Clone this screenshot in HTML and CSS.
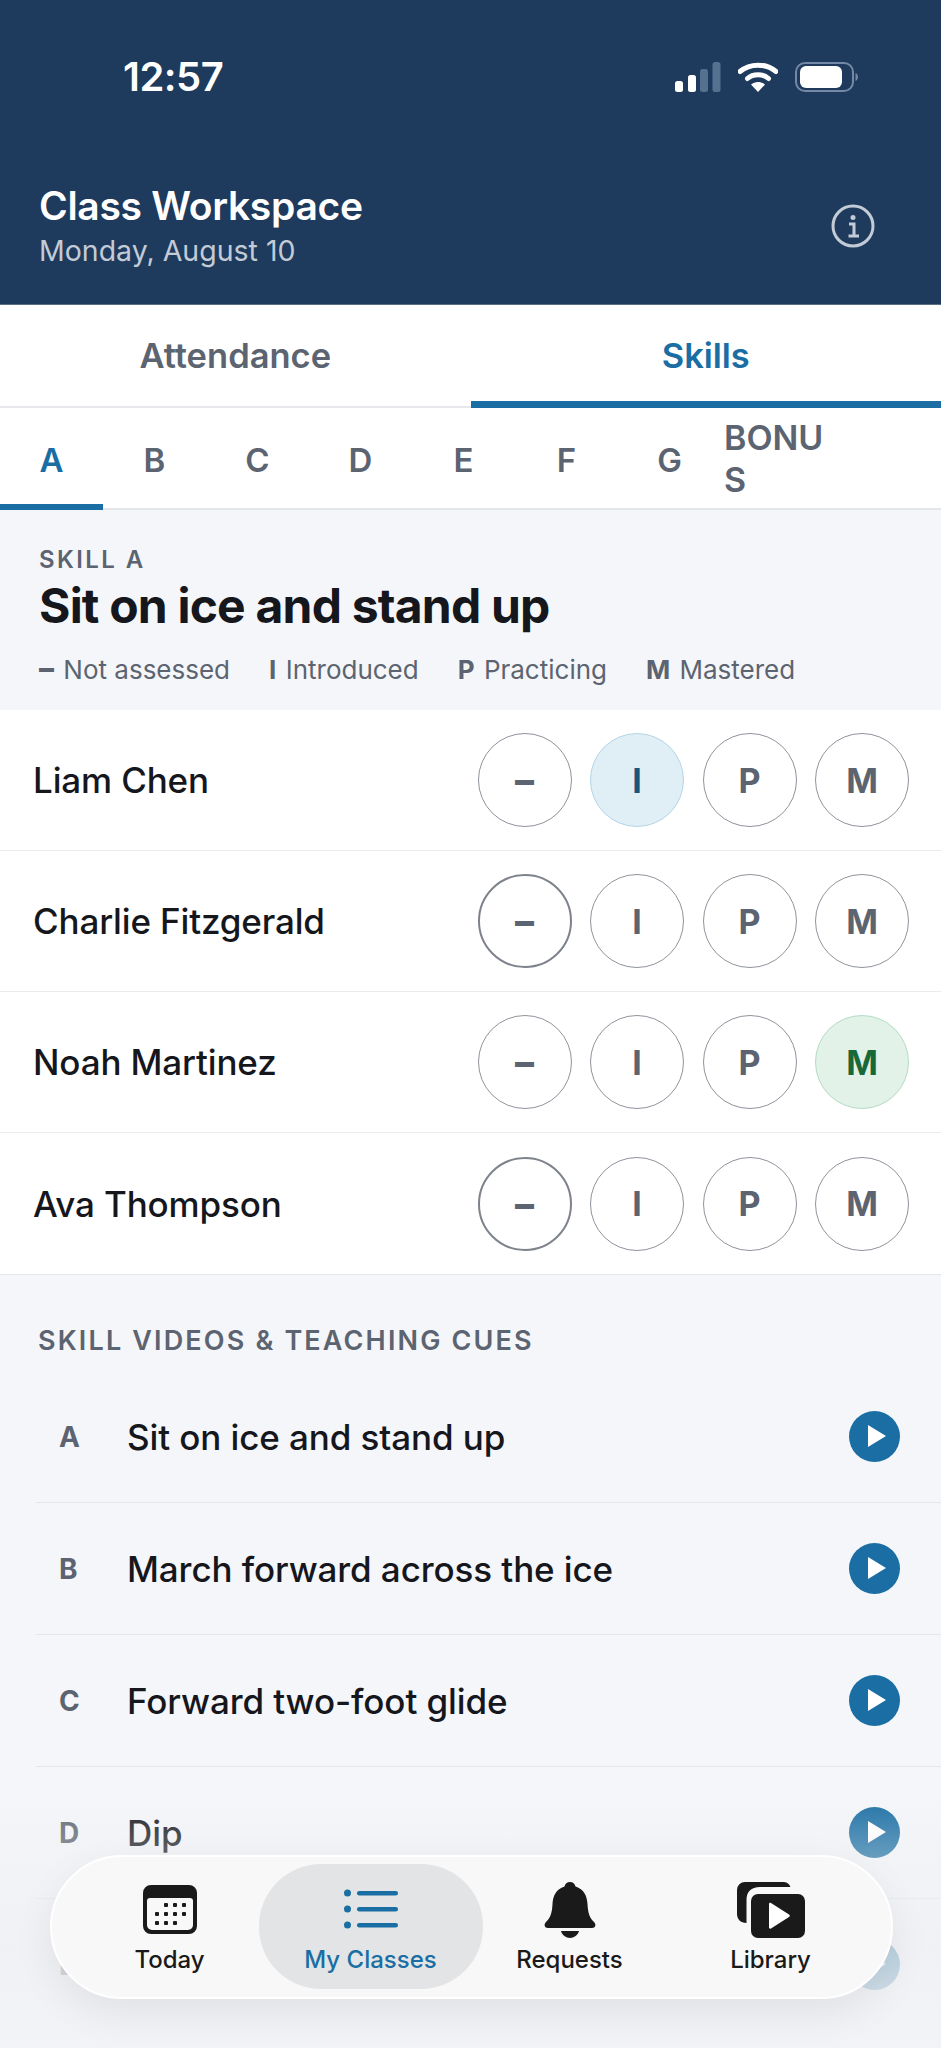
FILE: index.html
```html
<!DOCTYPE html>
<html lang="en">
<head>
  <meta charset="UTF-8" />
  <meta name="viewport" content="width=device-width, initial-scale=1.0"/>
  <title>Class Workspace</title>
  <link rel="stylesheet" href="styles.css">
</head>
<body>
<div class="app">

  <header class="top">
    <div class="status">
      <span class="time">12:57</span>
      <div class="status-icons">
        <svg width="46" height="30" viewBox="0 0 46 30">
          <rect x="0" y="19" width="8" height="11" rx="2.5" fill="#fff"/>
          <rect x="13" y="13" width="8" height="17" rx="2.5" fill="#fff"/>
          <rect x="25" y="7" width="8" height="23" rx="2.5" fill="#56708f"/>
          <rect x="37.500" y="0" width="8" height="30" rx="2.5" fill="#56708f"/>
        </svg>
        <svg width="40" height="30" viewBox="0 0 40 30">
          <path d="M2 9.500C12 1 28 1 38 9.500" fill="none" stroke="#fff" stroke-width="5" stroke-linecap="round"/>
          <path d="M9.500 16.500C15 11.500 25 11.500 30.500 16.500" fill="none" stroke="#fff" stroke-width="5" stroke-linecap="round"/>
          <path d="M13 22.500C17 19 23 19 27 22.500L20 30Z" fill="#fff"/>
        </svg>
        <svg width="64" height="30" viewBox="0 0 64 30">
          <rect x="1" y="1" width="57" height="28" rx="9" fill="none" stroke="#7389a5" stroke-width="2"/>
          <rect x="5" y="4" width="42" height="22" rx="6" fill="#fff"/>
          <path d="M60.500 11C62.500 12 63 13.500 63 15S62.500 18 60.500 19Z" fill="#7389a5"/>
        </svg>
      </div>
    </div>
    <div class="top-row">
      <div>
        <h1>Class Workspace</h1>
        <p class="date">Monday, August 10</p>
      </div>
      <svg class="info" width="44" height="44" viewBox="0 0 44 44">
        <circle cx="22" cy="22" r="20" fill="none" stroke="#c3cbd6" stroke-width="3"/>
        <circle cx="22" cy="13.500" r="2.500" fill="#c3cbd6"/>
        <path d="M18 20H23V31M17.500 32H28" fill="none" stroke="#c3cbd6" stroke-width="3"/>
      </svg>
    </div>
  </header>

  <nav class="tabs">
    <div class="tab">Attendance</div>
    <div class="tab active">Skills</div>
  </nav>

  <nav class="letters">
    <div class="letter active">A</div>
    <div class="letter">B</div>
    <div class="letter">C</div>
    <div class="letter">D</div>
    <div class="letter">E</div>
    <div class="letter">F</div>
    <div class="letter">G</div>
    <div class="letter bonus">BONUS</div>
  </nav>

  <section class="skill-head">
    <div class="eyebrow">SKILL A</div>
    <h2>Sit on ice and stand up</h2>
    <div class="legend">
      <span><b class="legend-dash">–</b> Not assessed</span>
      <span><b>I</b> Introduced</span>
      <span><b>P</b> Practicing</span>
      <span><b>M</b> Mastered</span>
    </div>
  </section>

  <section class="students">
    <div class="student">
      <span class="name">Liam Chen</span>
      <div class="marks">
        <div class="mark dash">–</div>
        <div class="mark blue">I</div>
        <div class="mark">P</div>
        <div class="mark">M</div>
      </div>
    </div>
    <div class="student">
      <span class="name">Charlie Fitzgerald</span>
      <div class="marks">
        <div class="mark dash dark">–</div>
        <div class="mark">I</div>
        <div class="mark">P</div>
        <div class="mark">M</div>
      </div>
    </div>
    <div class="student">
      <span class="name">Noah Martinez</span>
      <div class="marks">
        <div class="mark dash">–</div>
        <div class="mark">I</div>
        <div class="mark">P</div>
        <div class="mark green">M</div>
      </div>
    </div>
    <div class="student">
      <span class="name">Ava Thompson</span>
      <div class="marks">
        <div class="mark dash dark">–</div>
        <div class="mark">I</div>
        <div class="mark">P</div>
        <div class="mark">M</div>
      </div>
    </div>
  </section>

  <section class="videos">
    <div class="videos-title">SKILL VIDEOS &amp; TEACHING CUES</div>
    <div class="video">
      <span class="video-letter">A</span>
      <span class="video-name">Sit on ice and stand up</span>
      <span class="play"></span>
    </div>
    <div class="video">
      <span class="video-letter">B</span>
      <span class="video-name">March forward across the ice</span>
      <span class="play"></span>
    </div>
    <div class="video">
      <span class="video-letter">C</span>
      <span class="video-name">Forward two-foot glide</span>
      <span class="play"></span>
    </div>
    <div class="video">
      <span class="video-letter">D</span>
      <span class="video-name">Dip</span>
      <span class="play"></span>
    </div>
    <div class="video">
      <span class="video-letter">E</span>
      <span class="video-name"></span>
      <span class="play"></span>
    </div>
  </section>

  <div class="fade"></div>

  <nav class="bottom">
    <div class="bottom-item">
      <svg width="54" height="56" viewBox="0 0 54 56">
        <g transform="translate(0 3)">
          <path fill-rule="evenodd" fill="#1a1a1a" d="M8 0H46A8 8 0 0 1 54 8V41A8 8 0 0 1 46 49H8A8 8 0 0 1 0 41V8A8 8 0 0 1 8 0ZM7 13A3 3 0 0 0 4 16V40A5 5 0 0 0 9 45H45A5 5 0 0 0 50 40V16A3 3 0 0 0 47 13Z"/>
          <g fill="#1a1a1a">
            <rect x="21" y="18" width="4" height="4" rx="1"/><rect x="30" y="18" width="4" height="4" rx="1"/><rect x="39" y="18" width="4" height="4" rx="1"/>
            <rect x="12" y="27" width="4" height="4" rx="1"/><rect x="21" y="27" width="4" height="4" rx="1"/><rect x="30" y="27" width="4" height="4" rx="1"/><rect x="39" y="27" width="4" height="4" rx="1"/>
            <rect x="12" y="36" width="4" height="4" rx="1"/><rect x="21" y="36" width="4" height="4" rx="1"/><rect x="30" y="36" width="4" height="4" rx="1"/>
          </g>
        </g>
      </svg>
      <span>Today</span>
    </div>
    <div class="bottom-item active">
      <svg width="54" height="56" viewBox="0 0 54 56">
        <g fill="#1a6ea3">
          <circle cx="3.500" cy="11" r="3.500"/><circle cx="3.500" cy="27" r="3.500"/><circle cx="3.500" cy="43" r="3.500"/>
          <rect x="13" y="9" width="41" height="4.500" rx="2.250"/><rect x="13" y="25" width="41" height="4.500" rx="2.250"/><rect x="13" y="41" width="41" height="4.500" rx="2.250"/>
        </g>
      </svg>
      <span>My Classes</span>
    </div>
    <div class="bottom-item">
      <svg width="54" height="56" viewBox="0 0 54 56">
        <path fill="#1a1a1a" d="M27 0C30 0 32 2 32.500 4.500C41 7 44 14 44.500 22C45 32 47 36 51 40C53.500 42.500 52.500 46 49 46H5C1.500 46 .5 42.500 3 40C7 36 9 32 9.500 22C10 14 13 7 21.500 4.500C22 2 24 0 27 0Z"/>
        <path fill="#1a1a1a" d="M18 49H36C35 53 31 56 27 56S19 53 18 49Z"/>
      </svg>
      <span>Requests</span>
    </div>
    <div class="bottom-item">
      <svg width="68" height="56" viewBox="0 0 68 56">
        <path fill="#1a1a1a" d="M8 0H46A8 8 0 0 1 53.500 5H23C14 5 9.500 10 9.500 18V41C3.500 41 0 37 0 32V8A8 8 0 0 1 8 0Z"/>
        <rect x="14" y="12" width="54" height="44" rx="7" fill="#1a1a1a"/>
        <path fill="#fff" d="M32 22C32 21 33 20.500 34 21L52 32.500C53 33 53 34.500 52 35L34 46.500C33 47 32 46.500 32 45.500Z"/>
      </svg>
      <span>Library</span>
    </div>
  </nav>

</div>
</body>
</html>
```

FILE: styles.css
```css
* { margin: 0; padding: 0; box-sizing: border-box; }
body {
  font-family: Inter, 'Liberation Sans', sans-serif;
  background: #f5f6f9;
  color: #15171c;
}

.app {
  position: relative;
  width: 941px;
  height: 2048px;
  overflow: hidden;
  background: #f5f6f9;
}

/* header */
.top {
  height: 305px;
  background: #1e3a5c;
  color: #fff;
  padding: 0 39px;
  border-bottom: 1px solid #5b6f89;
}

.status {
  height: 183px;
  display: flex;
  justify-content: space-between;
  align-items: flex-start;
  padding: 55px 0 0 84px;
}

.time {
  font-size: 40px;
  font-weight: 600;
  line-height: 44px;
  letter-spacing: -0.5px;
}

.status-icons {
  display: flex;
  align-items: center;
  gap: 17px;
  padding: 7px 43px 0 0;
}

.top-row {
  display: flex;
  justify-content: space-between;
  align-items: center;
}

h1 {
  font-size: 39px;
  font-weight: 600;
  line-height: 46px;
  letter-spacing: -0.3px;
}

.date {
  font-size: 28.500px;
  line-height: 36px;
  color: #c3cbd6;
  margin-top: 4px;
}

.info { margin: 0 27px 0 0; }

/* main tabs */
.tabs {
  display: flex;
  height: 103px;
  background: #fff;
  border-bottom: 2px solid #e6e8ec;
}

.tab {
  flex: 1;
  text-align: center;
  font-size: 34.500px;
  font-weight: 600;
  line-height: 102px;
  color: #5b6470;
}

.tab.active {
  color: #1a6ea3;
  border-bottom: 7px solid #1a6ea3;
  margin-bottom: -2px;
}

/* letter tabs */
.letters {
  display: flex;
  height: 102px;
  background: #fff;
  border-bottom: 2px solid #e4e6eb;
}

.letter {
  width: 103px;
  text-align: center;
  font-size: 33px;
  font-weight: 600;
  line-height: 104px;
  color: #5b6470;
}

.letter.active {
  color: #1a6ea3;
  border-bottom: 6px solid #1a6ea3;
  height: 102px;
}

.letter.bonus {
  width: 110px;
  margin-left: 3px;
  font-size: 34px;
  line-height: 42px;
  padding-top: 9px;
  text-align: left;
  word-break: break-all;
}

/* skill heading */
.skill-head {
  height: 200px;
  padding: 36px 39px 0;
}

.eyebrow {
  font-size: 24px;
  font-weight: 600;
  letter-spacing: 2.400px;
  line-height: 28px;
  color: #5b6470;
}

h2 {
  font-size: 48px;
  font-weight: 700;
  letter-spacing: -0.8px;
  line-height: 56px;
  margin-top: 4px;
}

.legend {
  display: flex;
  gap: 39px;
  margin-top: 19px;
  font-size: 26px;
  line-height: 34px;
  color: #5b6470;
}

.legend b { font-weight: 700; margin-right: 2px; }
.legend .legend-dash { font-weight: 800; font-size: 30px; line-height: 1; }

/* students */
.students {
  background: #fff;
  border-bottom: 1px solid #e4e6eb;
}

.student {
  height: 141px;
  display: flex;
  justify-content: space-between;
  align-items: center;
  padding: 0 32px 0 33px;
  border-bottom: 1px solid #e9ebee;
}

.student:last-child { border-bottom: none; }

.name {
  font-size: 35px;
  font-weight: 500;
  letter-spacing: -0.15px;
}

.marks {
  display: flex;
  gap: 18.500px;
}

.mark {
  width: 94px;
  height: 94px;
  border-radius: 50%;
  border: 1.500px solid #8f949c;
  display: flex;
  align-items: center;
  justify-content: center;
  font-size: 34px;
  font-weight: 650;
  color: #5b6470;
}

.mark.dash { font-size: 38px; font-weight: 800; }
.mark.dark { border: 2px solid #7d828b; }
.mark.blue { background: #e0eef5; border-color: #b5d6e6; color: #17567f; }
.mark.green { background: #e2f2e8; border-color: #b4dcc3; color: #17693a; }

/* videos */
.videos { padding: 50px 0 0 36px; }

.videos-title {
  font-size: 27px;
  font-weight: 600;
  letter-spacing: 2.150px;
  line-height: 32px;
  margin-left: 2px;
  color: #5b6470;
  margin-bottom: 14px;
}

.video {
  height: 132px;
  display: flex;
  align-items: center;
  border-bottom: 1px solid #e4e6eb;
}

.video-letter {
  width: 91px;
  padding-left: 23px;
  font-size: 28px;
  font-weight: 700;
  color: #5b6470;
}

.video-name {
  flex: 1;
  font-size: 35px;
  font-weight: 500;
  letter-spacing: -0.1px;
}

.play {
  width: 51px;
  height: 51px;
  margin-right: 41px;
  border-radius: 50%;
  background: #1a6ea3;
  position: relative;
}

.play::after {
  content: "";
  position: absolute;
  left: 19px;
  top: 14px;
  border-left: 18px solid #fff;
  border-top: 11.500px solid transparent;
  border-bottom: 11.500px solid transparent;
}

/* list fades out under the floating bar */
.fade {
  position: absolute;
  left: 0;
  right: 0;
  top: 1790px;
  height: 258px;
  background: linear-gradient(rgba(236,238,241,0), rgba(236,238,241,0.35) 25%, rgba(238,240,243,0.75) 60%, rgba(242,243,246,0.95));
}

/* floating bottom bar */
.bottom {
  position: absolute;
  left: 50px;
  top: 1855px;
  width: 843px;
  height: 144px;
  display: flex;
  align-items: center;
  padding: 0 0 2px 28.500px;
  background: #f8f8f8;
  border: 2.500px solid #fff;
  border-radius: 72px;
  box-shadow: 0 14px 40px rgba(0,0,0,0.07);
}

.bottom-item {
  flex: none;
  height: 125px;
  display: flex;
  flex-direction: column;
  align-items: center;
  justify-content: flex-end;
  gap: 6.500px;
  padding-bottom: 15px;
  font-size: 24px;
  font-weight: 500;
  color: #1a1a1a;
  border-radius: 62px;
}

.bottom-item:nth-child(1) { width: 178px; }
.bottom-item:nth-child(2) { width: 224px; }
.bottom-item:nth-child(3) { width: 174px; }
.bottom-item:nth-child(4) { width: 228px; }

.bottom-item.active {
  background: #e3e4e5;
  color: #1a6ea3;
}
```
